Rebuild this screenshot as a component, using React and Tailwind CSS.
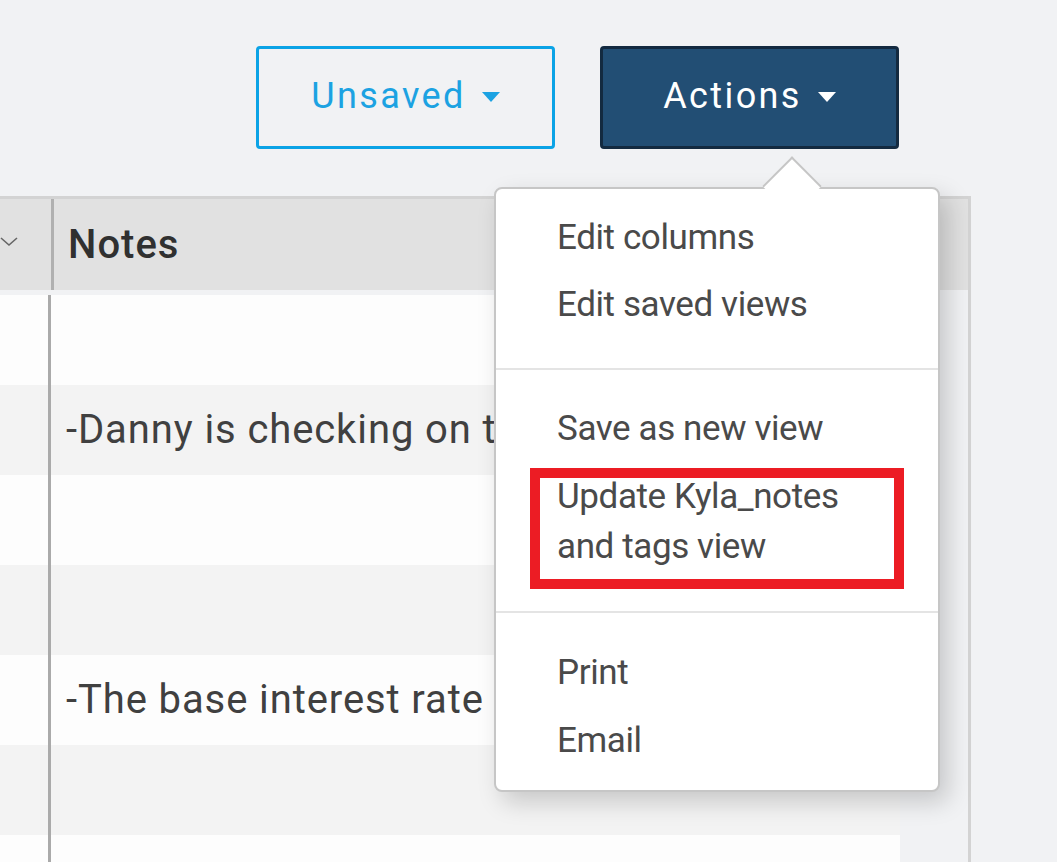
import React from 'react';

const rows = [
    { bg: 'bg-[#fdfdfd]', text: '' },
    { bg: 'bg-[#f3f3f3]', text: '-Danny is checking on t' },
    { bg: 'bg-[#fdfdfd]', text: '' },
    { bg: 'bg-[#f3f3f3]', text: '' },
    { bg: 'bg-[#fdfdfd]', text: '-The base interest rate' },
    { bg: 'bg-[#f3f3f3]', text: '' },
    { bg: 'bg-[#fdfdfd]', text: '' },
];

const Caret = ({ className }) => (
    <svg width="18" height="10" viewBox="0 0 18 10" className={className}>
        <path d="M0 0 L18 0 L9 10 Z" fill="currentColor" />
    </svg>
);

const ActionsMenu = () => (
    <div className="absolute left-[494px] top-[187px] w-[446px] h-[605px] z-10">
        <div className="relative h-full rounded-[8px] border-2 border-[#c6c6c6] bg-white shadow-[8px_10px_24px_rgba(0,0,0,0.18)] text-[35px] tracking-[-0.4px] text-[#4a4a4a]">
            {/* arrow */}
            <div className="absolute left-[275px] top-[-24px] h-[42px] w-[42px] rotate-45 border-l-2 border-t-2 border-[#c6c6c6] bg-white"></div>
            <div className="relative flex h-[179px] flex-col pl-[61px] pt-[15px]">
                <div className="leading-[67px]">Edit columns</div>
                <div className="leading-[67px]">Edit saved views</div>
            </div>
            <div className="h-[2px] bg-[#e4e4e4]"></div>
            <div className="relative flex h-[241px] flex-col pl-[61px] pt-[25px]">
                <div className="leading-[67px]">Save as new view</div>
                <div className="mt-[10px] leading-[50px]">Update Kyla_notes<br />and tags view</div>
            </div>
            <div className="h-[2px] bg-[#e4e4e4]"></div>
            <div className="flex flex-col pl-[61px] pt-[26px]">
                <div className="leading-[68px]">Print</div>
                <div className="leading-[68px]">Email</div>
            </div>
            {/* highlight */}
            <div className="absolute left-[34px] top-[279px] h-[121px] w-[374px] border-[10px] border-[#ec1c24]"></div>
        </div>
    </div>
);

export default function App() {
    return (
        <div className="relative h-[862px] w-[1057px] overflow-hidden bg-[#f1f2f4] font-['Roboto',sans-serif]">
            <div className="flex gap-[45px] pl-[256px] pt-[46px]">
                <button className="flex h-[103px] w-[299px] items-center justify-center gap-[16px] rounded-[4px] border-[3px] border-[#0ba3e6] pb-[4px] text-[36px] tracking-[2.4px] text-[#1ca2e2]">
                    <span>Unsaved</span>
                    <Caret className="mt-[2px]" />
                </button>
                <button className="flex h-[103px] w-[299px] items-center justify-center gap-[16px] rounded-[4px] border-[3px] border-[#132a40] bg-[#224e74] pb-[4px] text-[36px] tracking-[2.4px] text-white">
                    <span>Actions</span>
                    <Caret className="mt-[2px]" />
                </button>
            </div>

            <div className="mt-[47px] w-[971px] border-r-[3px] border-t-[3px] border-[#d3d3d3]">
                <div className="flex h-[91px] items-center bg-[#e1e1e1]">
                    <div className="flex h-full w-[51px] items-center">
                        <svg width="18" height="10" viewBox="0 0 18 10" className="mt-[-6px] text-[#666]">
                            <polyline points="1,1 9,8 17,1" fill="none" stroke="currentColor" strokeWidth="1.6" />
                        </svg>
                    </div>
                    <div className="h-full w-[3px] bg-[#b0b0b0]"></div>
                    <div className="pl-[14px] text-[40px] font-medium tracking-[1px] text-[#303030]">Notes</div>
                </div>
                <div className="h-[5px] bg-[#f1f2f4]"></div>
                {rows.map((r, i) => (
                    <div key={i} className={`flex h-[90px] w-[900px] ${r.bg}`}>
                        <div className="w-[48px]"></div>
                        <div className="h-full w-[3px] bg-[#aaaaaa]"></div>
                        <div className="flex items-center whitespace-nowrap pl-[15px] text-[40px] tracking-[0.9px] text-[#404040]">
                            {r.text}
                        </div>
                    </div>
                ))}
            </div>

            <ActionsMenu />
        </div>
    );
}
